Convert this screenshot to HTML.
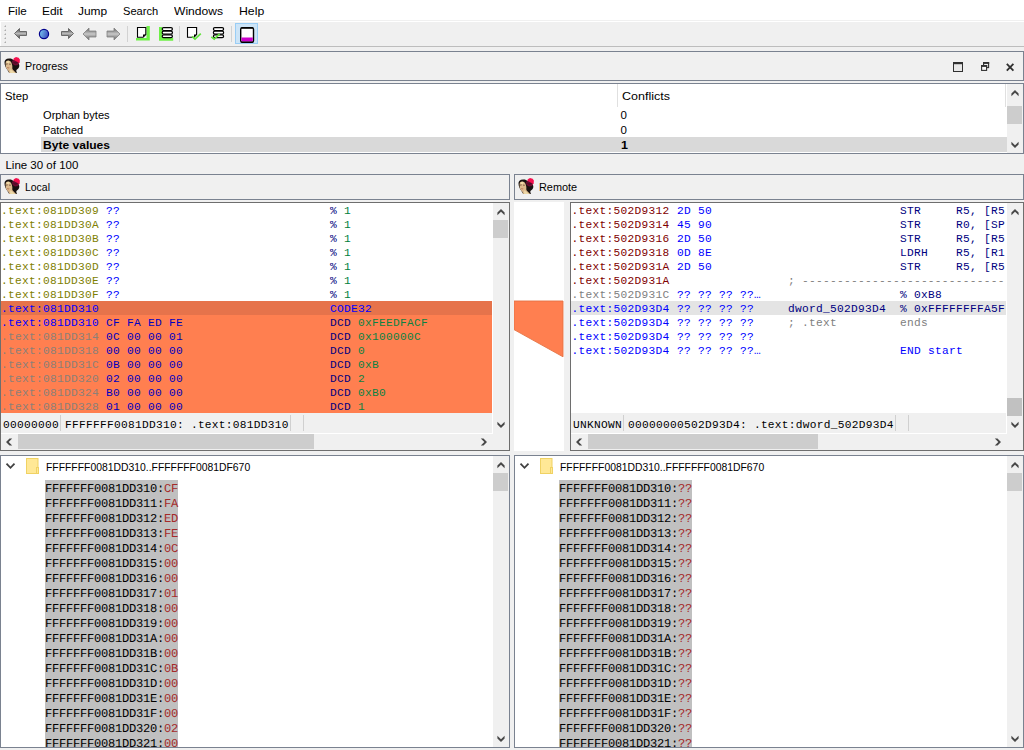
<!DOCTYPE html>
<html><head><meta charset="utf-8"><title>Progress</title>
<style>
*{margin:0;padding:0;box-sizing:border-box}
html,body{width:1024px;height:750px;overflow:hidden;background:#f0f0f0}
body{position:relative;font-family:"Liberation Sans",sans-serif;font-size:11.5px;color:#000}
.abs{position:absolute}
.ui{font-family:"Liberation Sans",sans-serif;font-size:11.5px;line-height:16px;height:16px;white-space:pre;position:absolute;transform-origin:0 0;color:#000}
.box{position:absolute;border:1px solid #7a8290;background:#fff}
.cbox{position:absolute;border:1px solid #6e6e6e;background:#fff}
.tp{position:absolute;border:1px solid #7a8290;background:#f0f0f0;height:26px}
.code{position:absolute;font-family:"Liberation Mono",monospace;font-size:11.2px;letter-spacing:0.28px;line-height:14px;white-space:pre;height:14px}
.hexl{position:absolute;font-family:"Liberation Mono",monospace;font-size:12.1px;letter-spacing:-0.261px;line-height:15px;white-space:pre;height:15px;width:133px;background:#c0c0c0;color:#000;text-rendering:geometricPrecision}
.hexl b{font-weight:normal;position:relative;top:2px}
.hexl i{font-style:normal;color:#a52a2a}
.sb{position:absolute;background:#f0f0f0}
.th{position:absolute;background:#cdcdcd}
</style></head>
<body>
<div class="abs" style="left:0;top:0;width:1024px;height:20px;background:#fff"></div>
<div class="ui" style="left:7.79px;top:3px;transform:scaleX(1.0117)">File</div>
<div class="ui" style="left:41.71px;top:3px;transform:scaleX(1.0372)">Edit</div>
<div class="ui" style="left:77.72px;top:3px;transform:scaleX(1.0373)">Jump</div>
<div class="ui" style="left:122.79px;top:3px;transform:scaleX(0.9666)">Search</div>
<div class="ui" style="left:174.35px;top:3px;transform:scaleX(1.0504)">Windows</div>
<div class="ui" style="left:238.79px;top:3px;transform:scaleX(1.0664)">Help</div>
<div class="abs" style="left:0;top:21px;width:1024px;height:1px;background:#fff"></div><div class="abs" style="left:0;top:22px;width:1px;height:24px;background:#fff"></div>
<svg class="abs" style="left:0;top:22px" width="270" height="24" viewBox="0 22 270 24">
<defs>
<linearGradient id="ga" gradientUnits="userSpaceOnUse" x1="0" y1="30" x2="0" y2="38"><stop offset="0" stop-color="#828282"/><stop offset="0.5" stop-color="#c8c8c8"/><stop offset="1" stop-color="#828282"/></linearGradient>
<linearGradient id="gb" x1="0" y1="0" x2="1" y2="0.3"><stop offset="0" stop-color="#7fd0f4"/><stop offset="1" stop-color="#3f55c0"/></linearGradient>
<linearGradient id="gc" gradientUnits="userSpaceOnUse" x1="0" y1="30.5" x2="0" y2="36.5"><stop offset="0" stop-color="#747474"/><stop offset="0.5" stop-color="#b8b8b8"/><stop offset="1" stop-color="#747474"/></linearGradient>
</defs>
<g fill="#acacac"><path d="M6,25v2h-2z"/><path d="M6,29v2h-2z"/><path d="M6,33v2h-2z"/><path d="M6,37v2h-2z"/><path d="M6,41v2h-2z"/></g>
<!-- back arrow (outlined) -->
<path d="M14.5,33.5 L19.5,28.5 L19.5,31.5 L26.5,31.5 L26.5,35.5 L19.5,35.5 L19.5,38.5 Z" fill="url(#gc)" stroke="#6a6a6a" stroke-width="1"/>
<!-- blue circle -->
<circle cx="44" cy="34" r="4.6" fill="url(#gb)" stroke="#00008c" stroke-width="1.2"/>
<!-- forward arrow (outlined) -->
<path d="M73.5,33.5 L68.5,28.5 L68.5,31.5 L61.5,31.5 L61.5,35.5 L68.5,35.5 L68.5,38.5 Z" fill="url(#gc)" stroke="#6a6a6a" stroke-width="1"/>
<!-- big gray left arrow -->
<path d="M83,34 L89,28 L89,31 L96,31 L96,37 L89,37 L89,40 Z" fill="url(#ga)" stroke="#808080" stroke-width="0.8"/>
<!-- big gray right arrow -->
<path d="M120,34 L114,28 L114,31 L107,31 L107,37 L114,37 L114,40 Z" fill="url(#ga)" stroke="#808080" stroke-width="0.8"/>
<rect x="127" y="26" width="1" height="16" fill="#d2d2d2"/>
<!-- page with green corner -->
<path d="M136,38 H146.5 V26 H149.8 V40.6 H136 Z" fill="#6ef046"/>
<path d="M137.5,27.5 H145.8 V34.5 L143,37.3 H137.5 Z" fill="#fff" stroke="#000" stroke-width="1.1"/>
<path d="M145.8,34.5 H143 V37.3 Z" fill="#000"/>
<!-- stack with green L -->
<path d="M159,27 H162 V38 H173.2 V40.8 H159 Z" fill="#6ef046"/>
<g fill="#fff" stroke="#000" stroke-width="1.2"><rect x="162.2" y="27.6" width="10.2" height="2.9" rx="1.4"/><rect x="162.2" y="31.2" width="10.2" height="2.9" rx="1.4"/><rect x="162.2" y="34.8" width="10.2" height="2.9" rx="1.4"/></g>
<rect x="179" y="26" width="1" height="16" fill="#d2d2d2"/>
<!-- page with check -->
<path d="M187.5,27.5 H196.6 V34.5 L194,37.3 H187.5 Z" fill="#fff" stroke="#000" stroke-width="1.1"/>
<path d="M196.6,34.5 H194 V37.3 Z" fill="#000"/>
<path d="M192,36.3 L195,39 L200.8,33.6" fill="none" stroke="#62e23e" stroke-width="1.7"/>
<!-- stack with check -->
<g fill="#fff" stroke="#000" stroke-width="1.2"><rect x="213.4" y="27.6" width="10.2" height="2.9" rx="1.4"/><rect x="213.4" y="31.2" width="10.2" height="2.9" rx="1.4"/><rect x="213.4" y="34.8" width="10.2" height="2.9" rx="1.4"/></g>
<path d="M211.3,36.8 L214.2,39.2 L219.6,33.8" fill="none" stroke="#62e23e" stroke-width="1.7"/>
<rect x="231" y="26" width="1" height="16" fill="#d2d2d2"/>
<!-- selected -->
<rect x="235.5" y="23.5" width="22" height="20" fill="#cce4f7" stroke="#99cdf5" stroke-width="1"/>
<rect x="240.7" y="27.7" width="12.8" height="14.6" rx="1.5" fill="#fff" stroke="#000" stroke-width="1.4"/>
<path d="M241.4,37.5 H252.8 V40.5 Q252.8,41.6 251.6,41.6 H242.6 Q241.4,41.6 241.4,40.5 Z" fill="#cc00cc"/>
<rect x="241.5" y="27" width="11.2" height="1.6" fill="#000"/>
<rect x="241.5" y="41.6" width="11.2" height="1.4" fill="#000"/>
</svg>

<div class="abs" style="left:0;top:46px;width:1024px;height:1px;background:#bdbdbd"></div>
<div class="tp" style="left:0;top:51px;width:1024px;height:30px"></div>
<svg class="abs" style="left:4px;top:57px" width="16" height="16" viewBox="0 0 16 16"><path d="M0.5,5.6 C0.3,3.2 2,1.6 5,1.5 C7,1.3 8.6,2 9.6,3 L14.2,6 C16,8 15.6,10.8 13.6,12 C12.6,12.7 12.1,13.2 12.4,14.2 L12.9,16 L5.2,16 L3.6,13.2 C1.6,11 0.6,8.2 0.5,5.6Z" fill="#17110f"/>
<path d="M2.2,4.3 C3.2,3.1 5.2,3.1 6.4,4.3 C7.6,5.7 8.1,7.4 8.3,9 C8.5,10.4 8,11.4 8.7,12.4 L12.1,15.9 L5.3,16 C5.1,14.6 4.1,13.7 3.1,12.6 C1.9,11 1.5,9 1.7,7.5 C1.5,6.2 1.6,5.1 2.2,4.3Z" fill="#dcb98c"/>
<path d="M2.6,4.6 C3.4,3.6 4.8,3.6 5.6,4.6 C5.8,5.6 5,6.2 3.6,6.2 C2.8,6.1 2.4,5.4 2.6,4.6Z" fill="#f1dcaa"/>
<path d="M6.4,12.2 C7.4,13 9.6,14.6 11.4,15.9 L6.2,16 C6.2,14.8 6,13.4 6.4,12.2Z" fill="#ecd9a8"/>
<path d="M2.2,7.1 L3.6,6.9 M5.2,7.1 L6.6,7.3" stroke="#4a3020" stroke-width="0.8" fill="none"/>
<path d="M3.2,10.6 C3.8,11 4.6,11 5.2,10.7" stroke="#a8553c" stroke-width="0.7" fill="none"/>
<path d="M9.8,1.2 L12,0 L14.6,0.7 L15.9,2.6 L15.7,5.2 L14.4,6.4 L9.2,3.2Z" fill="#f4104e"/>
<path d="M7.9,4 L9.8,2.9 L14.6,5.4 L14.3,8 L11,8.5 L8.6,7Z" fill="#6a0c30"/>
<path d="M9.4,5.2 L11,6.2 L13.2,5.6" stroke="#3a0a1c" stroke-width="0.8" fill="none"/>
</svg>
<div class="ui" style="left:24.91px;top:58px;transform:scaleX(0.9317)">Progress</div>
<svg class="abs" style="left:950px;top:58px" width="70" height="18" viewBox="950 58 70 18">
<rect x="953.5" y="63" width="9" height="8.5" fill="#e8e8e8" stroke="#303030" stroke-width="1"/>
<rect x="953" y="62" width="10" height="2.2" fill="#303030"/>
<rect x="983.6" y="63" width="5" height="4.6" fill="#f0f0f0" stroke="#303030" stroke-width="1.1"/>
<rect x="983" y="62" width="6.2" height="1.8" fill="#303030"/>
<rect x="981.6" y="66" width="5" height="4.4" fill="#f7f7f7" stroke="#303030" stroke-width="1.1"/>
<rect x="981" y="65" width="6.2" height="1.8" fill="#303030"/>
<path d="M1006.8,63.8 L1013.4,70.6 M1013.4,63.8 L1006.8,70.6" stroke="#303030" stroke-width="1.8" fill="none"/>
</svg>

<div class="box" style="left:0;top:83px;width:1024px;height:71px"></div>
<div class="abs" style="left:41px;top:137px;width:966px;height:15px;background:#d9d9d9"></div>
<div class="abs" style="left:617px;top:84px;width:1px;height:23px;background:#e0e0e0"></div>
<div class="abs" style="left:1005px;top:84px;width:1px;height:23px;background:#e0e0e0"></div>
<div class="ui" style="left:4.79px;top:88px;transform:scaleX(0.9801)">Step</div>
<div class="ui" style="left:621.68px;top:88px;transform:scaleX(1.0858)">Conflicts</div>
<div class="ui" style="left:43.27px;top:107px;transform:scaleX(0.9651)">Orphan bytes</div>
<div class="ui" style="left:42.90px;top:122px;transform:scaleX(0.9481)">Patched</div>
<div class="ui" style="left:43.49px;top:137px;transform:scaleX(1.0483);font-weight:bold">Byte values</div>
<div class="ui" style="left:620.45px;top:107px;transform:scaleX(1.0000)">0</div>
<div class="ui" style="left:620.45px;top:122px;transform:scaleX(1.0000)">0</div>
<div class="ui" style="left:620.91px;top:137px;transform:scaleX(1.0841);font-weight:bold">1</div>
<div class="sb" style="left:1007px;top:84px;width:16px;height:69px"></div>
<div class="th" style="left:1007px;top:106px;width:15px;height:18px"></div>
<svg class="abs" style="left:1006.5px;top:85.0px" width="16" height="16" viewBox="-8 -8 16 16"><polygon points="-3.6,0.5 0.0,-3.0 3.6,0.5 3.6,3.2 0.0,-0.3 -3.6,3.2" fill="#484848"/></svg>
<svg class="abs" style="left:1006.5px;top:137.0px" width="16" height="16" viewBox="-8 -8 16 16"><polygon points="-3.6,-0.5 0.0,3.0 3.6,-0.5 3.6,-3.2 0.0,0.3 -3.6,-3.2" fill="#484848"/></svg>
<div class="ui" style="left:5.45px;top:157px;transform:scaleX(1.0000)">Line 30 of 100</div>
<div class="tp" style="left:0;top:174px;width:510px"></div>
<div class="tp" style="left:514px;top:174px;width:510px"></div>
<svg class="abs" style="left:4px;top:178px" width="16" height="16" viewBox="0 0 16 16"><path d="M0.5,5.6 C0.3,3.2 2,1.6 5,1.5 C7,1.3 8.6,2 9.6,3 L14.2,6 C16,8 15.6,10.8 13.6,12 C12.6,12.7 12.1,13.2 12.4,14.2 L12.9,16 L5.2,16 L3.6,13.2 C1.6,11 0.6,8.2 0.5,5.6Z" fill="#17110f"/>
<path d="M2.2,4.3 C3.2,3.1 5.2,3.1 6.4,4.3 C7.6,5.7 8.1,7.4 8.3,9 C8.5,10.4 8,11.4 8.7,12.4 L12.1,15.9 L5.3,16 C5.1,14.6 4.1,13.7 3.1,12.6 C1.9,11 1.5,9 1.7,7.5 C1.5,6.2 1.6,5.1 2.2,4.3Z" fill="#dcb98c"/>
<path d="M2.6,4.6 C3.4,3.6 4.8,3.6 5.6,4.6 C5.8,5.6 5,6.2 3.6,6.2 C2.8,6.1 2.4,5.4 2.6,4.6Z" fill="#f1dcaa"/>
<path d="M6.4,12.2 C7.4,13 9.6,14.6 11.4,15.9 L6.2,16 C6.2,14.8 6,13.4 6.4,12.2Z" fill="#ecd9a8"/>
<path d="M2.2,7.1 L3.6,6.9 M5.2,7.1 L6.6,7.3" stroke="#4a3020" stroke-width="0.8" fill="none"/>
<path d="M3.2,10.6 C3.8,11 4.6,11 5.2,10.7" stroke="#a8553c" stroke-width="0.7" fill="none"/>
<path d="M9.8,1.2 L12,0 L14.6,0.7 L15.9,2.6 L15.7,5.2 L14.4,6.4 L9.2,3.2Z" fill="#f4104e"/>
<path d="M7.9,4 L9.8,2.9 L14.6,5.4 L14.3,8 L11,8.5 L8.6,7Z" fill="#6a0c30"/>
<path d="M9.4,5.2 L11,6.2 L13.2,5.6" stroke="#3a0a1c" stroke-width="0.8" fill="none"/>
</svg>
<svg class="abs" style="left:518px;top:178px" width="16" height="16" viewBox="0 0 16 16"><path d="M0.5,5.6 C0.3,3.2 2,1.6 5,1.5 C7,1.3 8.6,2 9.6,3 L14.2,6 C16,8 15.6,10.8 13.6,12 C12.6,12.7 12.1,13.2 12.4,14.2 L12.9,16 L5.2,16 L3.6,13.2 C1.6,11 0.6,8.2 0.5,5.6Z" fill="#17110f"/>
<path d="M2.2,4.3 C3.2,3.1 5.2,3.1 6.4,4.3 C7.6,5.7 8.1,7.4 8.3,9 C8.5,10.4 8,11.4 8.7,12.4 L12.1,15.9 L5.3,16 C5.1,14.6 4.1,13.7 3.1,12.6 C1.9,11 1.5,9 1.7,7.5 C1.5,6.2 1.6,5.1 2.2,4.3Z" fill="#dcb98c"/>
<path d="M2.6,4.6 C3.4,3.6 4.8,3.6 5.6,4.6 C5.8,5.6 5,6.2 3.6,6.2 C2.8,6.1 2.4,5.4 2.6,4.6Z" fill="#f1dcaa"/>
<path d="M6.4,12.2 C7.4,13 9.6,14.6 11.4,15.9 L6.2,16 C6.2,14.8 6,13.4 6.4,12.2Z" fill="#ecd9a8"/>
<path d="M2.2,7.1 L3.6,6.9 M5.2,7.1 L6.6,7.3" stroke="#4a3020" stroke-width="0.8" fill="none"/>
<path d="M3.2,10.6 C3.8,11 4.6,11 5.2,10.7" stroke="#a8553c" stroke-width="0.7" fill="none"/>
<path d="M9.8,1.2 L12,0 L14.6,0.7 L15.9,2.6 L15.7,5.2 L14.4,6.4 L9.2,3.2Z" fill="#f4104e"/>
<path d="M7.9,4 L9.8,2.9 L14.6,5.4 L14.3,8 L11,8.5 L8.6,7Z" fill="#6a0c30"/>
<path d="M9.4,5.2 L11,6.2 L13.2,5.6" stroke="#3a0a1c" stroke-width="0.8" fill="none"/>
</svg>
<div class="ui" style="left:24.94px;top:179px;transform:scaleX(0.9079)">Local</div>
<div class="ui" style="left:538.60px;top:179px;transform:scaleX(0.9459)">Remote</div>
<div class="cbox" style="left:0;top:202px;width:510px;height:249px"></div>
<div class="abs" style="left:1px;top:301px;width:491px;height:14px;background:#e6734b"></div>
<div class="abs" style="left:1px;top:315px;width:491px;height:98px;background:#ff7f50"></div>
<div class="code" style="left:1px;top:204px;color:#808000">.text:081DD309</div>
<div class="code" style="left:106px;top:204px;color:#0000ff">??</div>
<div class="code" style="left:330px;top:204px;color:#000080">%</div>
<div class="code" style="left:344px;top:204px;color:#008040">1</div>
<div class="code" style="left:1px;top:218px;color:#808000">.text:081DD30A</div>
<div class="code" style="left:106px;top:218px;color:#0000ff">??</div>
<div class="code" style="left:330px;top:218px;color:#000080">%</div>
<div class="code" style="left:344px;top:218px;color:#008040">1</div>
<div class="code" style="left:1px;top:232px;color:#808000">.text:081DD30B</div>
<div class="code" style="left:106px;top:232px;color:#0000ff">??</div>
<div class="code" style="left:330px;top:232px;color:#000080">%</div>
<div class="code" style="left:344px;top:232px;color:#008040">1</div>
<div class="code" style="left:1px;top:246px;color:#808000">.text:081DD30C</div>
<div class="code" style="left:106px;top:246px;color:#0000ff">??</div>
<div class="code" style="left:330px;top:246px;color:#000080">%</div>
<div class="code" style="left:344px;top:246px;color:#008040">1</div>
<div class="code" style="left:1px;top:260px;color:#808000">.text:081DD30D</div>
<div class="code" style="left:106px;top:260px;color:#0000ff">??</div>
<div class="code" style="left:330px;top:260px;color:#000080">%</div>
<div class="code" style="left:344px;top:260px;color:#008040">1</div>
<div class="code" style="left:1px;top:274px;color:#808000">.text:081DD30E</div>
<div class="code" style="left:106px;top:274px;color:#0000ff">??</div>
<div class="code" style="left:330px;top:274px;color:#000080">%</div>
<div class="code" style="left:344px;top:274px;color:#008040">1</div>
<div class="code" style="left:1px;top:288px;color:#808000">.text:081DD30F</div>
<div class="code" style="left:106px;top:288px;color:#0000ff">??</div>
<div class="code" style="left:330px;top:288px;color:#000080">%</div>
<div class="code" style="left:344px;top:288px;color:#008040">1</div>
<div class="code" style="left:1px;top:302px;color:#0000ff">.text:081DD310</div>
<div class="code" style="left:330px;top:302px;color:#0000ff">CODE32</div>
<div class="code" style="left:1px;top:316px;color:#0000ff">.text:081DD310</div>
<div class="code" style="left:106px;top:316px;color:#0000c0">CF FA ED FE</div>
<div class="code" style="left:330px;top:316px;color:#000080">DCD</div>
<div class="code" style="left:358px;top:316px;color:#0c8242">0xFEEDFACF</div>
<div class="code" style="left:1px;top:330px;color:#8c8078">.text:081DD314</div>
<div class="code" style="left:106px;top:330px;color:#0000c0">0C 00 00 01</div>
<div class="code" style="left:330px;top:330px;color:#000080">DCD</div>
<div class="code" style="left:358px;top:330px;color:#0c8242">0x100000C</div>
<div class="code" style="left:1px;top:344px;color:#8c8078">.text:081DD318</div>
<div class="code" style="left:106px;top:344px;color:#0000c0">00 00 00 00</div>
<div class="code" style="left:330px;top:344px;color:#000080">DCD</div>
<div class="code" style="left:358px;top:344px;color:#0c8242">0</div>
<div class="code" style="left:1px;top:358px;color:#8c8078">.text:081DD31C</div>
<div class="code" style="left:106px;top:358px;color:#0000c0">0B 00 00 00</div>
<div class="code" style="left:330px;top:358px;color:#000080">DCD</div>
<div class="code" style="left:358px;top:358px;color:#0c8242">0xB</div>
<div class="code" style="left:1px;top:372px;color:#8c8078">.text:081DD320</div>
<div class="code" style="left:106px;top:372px;color:#0000c0">02 00 00 00</div>
<div class="code" style="left:330px;top:372px;color:#000080">DCD</div>
<div class="code" style="left:358px;top:372px;color:#0c8242">2</div>
<div class="code" style="left:1px;top:386px;color:#8c8078">.text:081DD324</div>
<div class="code" style="left:106px;top:386px;color:#0000c0">B0 00 00 00</div>
<div class="code" style="left:330px;top:386px;color:#000080">DCD</div>
<div class="code" style="left:358px;top:386px;color:#0c8242">0xB0</div>
<div class="code" style="left:1px;top:400px;color:#8c8078">.text:081DD328</div>
<div class="code" style="left:106px;top:400px;color:#0000c0">01 00 00 00</div>
<div class="code" style="left:330px;top:400px;color:#000080">DCD</div>
<div class="code" style="left:358px;top:400px;color:#0c8242">1</div>
<div class="abs" style="left:1px;top:413px;width:492px;height:21px;background:#f0f0f0;border-right:1px solid #fff;border-bottom:1px solid #fff"></div>
<div class="abs" style="left:60px;top:415px;width:1px;height:16px;background:#d0d0d0"></div>
<div class="abs" style="left:290px;top:415px;width:1px;height:16px;background:#d0d0d0"></div>
<div class="abs" style="left:303px;top:415px;width:1px;height:16px;background:#d0d0d0"></div>
<div class="code" style="left:3px;top:418px;color:#000">00000000</div>
<div class="code" style="left:65px;top:418px;color:#000">FFFFFFF0081DD310: .text:081DD310</div>
<div class="sb" style="left:493px;top:203px;width:16px;height:231px"></div>
<div class="th" style="left:493px;top:220px;width:15px;height:18px"></div>
<div class="sb" style="left:1px;top:434px;width:508px;height:16px"></div>
<div class="th" style="left:18px;top:434px;width:296px;height:15px"></div>
<svg class="abs" style="left:492.5px;top:204.0px" width="16" height="16" viewBox="-8 -8 16 16"><polygon points="-3.6,0.5 0.0,-3.0 3.6,0.5 3.6,3.2 0.0,-0.3 -3.6,3.2" fill="#484848"/></svg>
<svg class="abs" style="left:492.5px;top:417.0px" width="16" height="16" viewBox="-8 -8 16 16"><polygon points="-3.6,-0.5 0.0,3.0 3.6,-0.5 3.6,-3.2 0.0,0.3 -3.6,-3.2" fill="#484848"/></svg>
<svg class="abs" style="left:1.0px;top:433.5px" width="16" height="16" viewBox="-8 -8 16 16"><polygon points="0.5,-3.6 -3.0,0.0 0.5,3.6 3.2,3.6 -0.3,0.0 3.2,-3.6" fill="#484848"/></svg>
<svg class="abs" style="left:476.0px;top:433.5px" width="16" height="16" viewBox="-8 -8 16 16"><polygon points="-0.5,-3.6 3.0,0.0 -0.5,3.6 -3.2,3.6 0.3,0.0 -3.2,-3.6" fill="#484848"/></svg>
<div class="abs" style="left:514px;top:202px;width:50px;height:249px;background:#fff"></div>
<svg class="abs" style="left:514px;top:202px" width="50" height="249"><polygon points="0,99 49,99 49,154.8 0,127.6" fill="#ff7f50" stroke="#e47343" stroke-width="0.9"/></svg>
<div class="cbox" style="left:570px;top:202px;width:454px;height:249px"></div>
<div class="abs" style="left:571px;top:301px;width:435px;height:14px;background:#e4e4e4"></div>
<div class="code" style="left:571.5px;top:204px;color:#800000">.text:502D9312</div>
<div class="code" style="left:677px;top:204px;color:#0000ff">2D 50</div>
<div class="code" style="left:900px;top:204px;color:#000080">STR</div>
<div class="code" style="left:956px;top:204px;color:#000080">R5, [R5</div>
<div class="code" style="left:571.5px;top:218px;color:#800000">.text:502D9314</div>
<div class="code" style="left:677px;top:218px;color:#0000ff">45 90</div>
<div class="code" style="left:900px;top:218px;color:#000080">STR</div>
<div class="code" style="left:956px;top:218px;color:#000080">R0, [SP</div>
<div class="code" style="left:571.5px;top:232px;color:#800000">.text:502D9316</div>
<div class="code" style="left:677px;top:232px;color:#0000ff">2D 50</div>
<div class="code" style="left:900px;top:232px;color:#000080">STR</div>
<div class="code" style="left:956px;top:232px;color:#000080">R5, [R5</div>
<div class="code" style="left:571.5px;top:246px;color:#800000">.text:502D9318</div>
<div class="code" style="left:677px;top:246px;color:#0000ff">0D 8E</div>
<div class="code" style="left:900px;top:246px;color:#000080">LDRH</div>
<div class="code" style="left:956px;top:246px;color:#000080">R5, [R1</div>
<div class="code" style="left:571.5px;top:260px;color:#800000">.text:502D931A</div>
<div class="code" style="left:677px;top:260px;color:#0000ff">2D 50</div>
<div class="code" style="left:900px;top:260px;color:#000080">STR</div>
<div class="code" style="left:956px;top:260px;color:#000080">R5, [R5</div>
<div class="code" style="left:571.5px;top:274px;color:#800000">.text:502D931A</div>
<div class="code" style="left:788px;top:274px;color:#808080;width:218px;overflow:hidden">; --------------------------------</div>
<div class="code" style="left:571.5px;top:288px;color:#808080">.text:502D931C</div>
<div class="code" style="left:677px;top:288px;color:#0000ff">?? ?? ?? ??…</div>
<div class="code" style="left:900px;top:288px;color:#000080">% 0xB8</div>
<div class="code" style="left:571.5px;top:302px;color:#0000ff">.text:502D93D4</div>
<div class="code" style="left:677px;top:302px;color:#0000ff">?? ?? ?? ??</div>
<div class="code" style="left:788px;top:302px;color:#000080">dword_502D93D4</div>
<div class="code" style="left:900px;top:302px;color:#000080">% 0xFFFFFFFFA5F</div>
<div class="code" style="left:571.5px;top:316px;color:#0000ff">.text:502D93D4</div>
<div class="code" style="left:677px;top:316px;color:#0000ff">?? ?? ?? ??</div>
<div class="code" style="left:788px;top:316px;color:#808080">; .text</div>
<div class="code" style="left:900px;top:316px;color:#808080">ends</div>
<div class="code" style="left:571.5px;top:330px;color:#0000ff">.text:502D93D4</div>
<div class="code" style="left:677px;top:330px;color:#0000ff">?? ?? ?? ??</div>
<div class="code" style="left:571.5px;top:344px;color:#0000ff">.text:502D93D4</div>
<div class="code" style="left:677px;top:344px;color:#0000ff">?? ?? ?? ??…</div>
<div class="code" style="left:900px;top:344px;color:#0000ff">END start</div>
<div class="abs" style="left:571px;top:413px;width:436px;height:21px;background:#f0f0f0;border-right:1px solid #fff;border-bottom:1px solid #fff"></div>
<div class="abs" style="left:623px;top:415px;width:1px;height:16px;background:#d0d0d0"></div>
<div class="abs" style="left:895px;top:415px;width:1px;height:16px;background:#d0d0d0"></div>
<div class="abs" style="left:908px;top:415px;width:1px;height:16px;background:#d0d0d0"></div>
<div class="code" style="left:573px;top:418px;color:#000">UNKNOWN</div>
<div class="code" style="left:628px;top:418px;color:#000">00000000502D93D4: .text:dword_502D93D4</div>
<div class="sb" style="left:1007px;top:203px;width:16px;height:231px"></div>
<div class="th" style="left:1007px;top:398px;width:15px;height:18px;background:#c1c1c1"></div>
<div class="sb" style="left:571px;top:434px;width:452px;height:16px"></div>
<div class="th" style="left:588px;top:434px;width:230px;height:15px"></div>
<svg class="abs" style="left:1006.5px;top:204.0px" width="16" height="16" viewBox="-8 -8 16 16"><polygon points="-3.6,0.5 0.0,-3.0 3.6,0.5 3.6,3.2 0.0,-0.3 -3.6,3.2" fill="#484848"/></svg>
<svg class="abs" style="left:1006.5px;top:417.0px" width="16" height="16" viewBox="-8 -8 16 16"><polygon points="-3.6,-0.5 0.0,3.0 3.6,-0.5 3.6,-3.2 0.0,0.3 -3.6,-3.2" fill="#484848"/></svg>
<svg class="abs" style="left:571.0px;top:433.5px" width="16" height="16" viewBox="-8 -8 16 16"><polygon points="0.5,-3.6 -3.0,0.0 0.5,3.6 3.2,3.6 -0.3,0.0 3.2,-3.6" fill="#484848"/></svg>
<svg class="abs" style="left:990.2px;top:433.5px" width="16" height="16" viewBox="-8 -8 16 16"><polygon points="-0.5,-3.6 3.0,0.0 -0.5,3.6 -3.2,3.6 0.3,0.0 -3.2,-3.6" fill="#484848"/></svg>
<div class="box" style="left:0px;top:455px;width:510px;height:293px"></div>
<div class="sb" style="left:493px;top:456px;width:16px;height:291px"></div>
<div class="th" style="left:493px;top:473px;width:15px;height:18px"></div>
<svg class="abs" style="left:492.5px;top:457.0px" width="16" height="16" viewBox="-8 -8 16 16"><polygon points="-3.6,0.5 0.0,-3.0 3.6,0.5 3.6,3.2 0.0,-0.3 -3.6,3.2" fill="#484848"/></svg>
<svg class="abs" style="left:492.5px;top:731.0px" width="16" height="16" viewBox="-8 -8 16 16"><polygon points="-3.6,-0.5 0.0,3.0 3.6,-0.5 3.6,-3.2 0.0,0.3 -3.6,-3.2" fill="#484848"/></svg>
<svg class="abs" style="left:4px;top:460px" width="14" height="12" viewBox="4 460 14 12"><polyline points="6.5,463.6 10.5,467.8 14.5,463.6" fill="none" stroke="#404040" stroke-width="1.8"/></svg>
<svg class="abs" style="left:26px;top:458px" width="14" height="17" viewBox="0 0 14 17"><rect x="0.5" y="0.5" width="11.5" height="15" fill="#ffe896" stroke="#f0d263" stroke-width="1"/><rect x="10.5" y="9.5" width="2" height="6" fill="#ffe896" stroke="#f0d263" stroke-width="1"/></svg>
<div class="ui" style="left:46.14px;top:459px;transform:scaleX(0.9025)">FFFFFFF0081DD310..FFFFFFF0081DF670</div>
<div class="box" style="left:514px;top:455px;width:510px;height:293px"></div>
<div class="sb" style="left:1007px;top:456px;width:16px;height:291px"></div>
<div class="th" style="left:1007px;top:473px;width:15px;height:18px"></div>
<svg class="abs" style="left:1006.5px;top:457.0px" width="16" height="16" viewBox="-8 -8 16 16"><polygon points="-3.6,0.5 0.0,-3.0 3.6,0.5 3.6,3.2 0.0,-0.3 -3.6,3.2" fill="#484848"/></svg>
<svg class="abs" style="left:1006.5px;top:731.0px" width="16" height="16" viewBox="-8 -8 16 16"><polygon points="-3.6,-0.5 0.0,3.0 3.6,-0.5 3.6,-3.2 0.0,0.3 -3.6,-3.2" fill="#484848"/></svg>
<svg class="abs" style="left:518px;top:460px" width="14" height="12" viewBox="4 460 14 12"><polyline points="6.5,463.6 10.5,467.8 14.5,463.6" fill="none" stroke="#404040" stroke-width="1.8"/></svg>
<svg class="abs" style="left:540px;top:458px" width="14" height="17" viewBox="0 0 14 17"><rect x="0.5" y="0.5" width="11.5" height="15" fill="#ffe896" stroke="#f0d263" stroke-width="1"/><rect x="10.5" y="9.5" width="2" height="6" fill="#ffe896" stroke="#f0d263" stroke-width="1"/></svg>
<div class="ui" style="left:560.14px;top:459px;transform:scaleX(0.9025)">FFFFFFF0081DD310..FFFFFFF0081DF670</div>
<div class="hexl" style="left:45px;top:480px"><b>FFFFFFF0081DD310:<i>CF</i></b></div>
<div class="hexl" style="left:559px;top:480px"><b>FFFFFFF0081DD310:<i>??</i></b></div>
<div class="hexl" style="left:45px;top:495px"><b>FFFFFFF0081DD311:<i>FA</i></b></div>
<div class="hexl" style="left:559px;top:495px"><b>FFFFFFF0081DD311:<i>??</i></b></div>
<div class="hexl" style="left:45px;top:510px"><b>FFFFFFF0081DD312:<i>ED</i></b></div>
<div class="hexl" style="left:559px;top:510px"><b>FFFFFFF0081DD312:<i>??</i></b></div>
<div class="hexl" style="left:45px;top:525px"><b>FFFFFFF0081DD313:<i>FE</i></b></div>
<div class="hexl" style="left:559px;top:525px"><b>FFFFFFF0081DD313:<i>??</i></b></div>
<div class="hexl" style="left:45px;top:540px"><b>FFFFFFF0081DD314:<i>0C</i></b></div>
<div class="hexl" style="left:559px;top:540px"><b>FFFFFFF0081DD314:<i>??</i></b></div>
<div class="hexl" style="left:45px;top:555px"><b>FFFFFFF0081DD315:<i>00</i></b></div>
<div class="hexl" style="left:559px;top:555px"><b>FFFFFFF0081DD315:<i>??</i></b></div>
<div class="hexl" style="left:45px;top:570px"><b>FFFFFFF0081DD316:<i>00</i></b></div>
<div class="hexl" style="left:559px;top:570px"><b>FFFFFFF0081DD316:<i>??</i></b></div>
<div class="hexl" style="left:45px;top:585px"><b>FFFFFFF0081DD317:<i>01</i></b></div>
<div class="hexl" style="left:559px;top:585px"><b>FFFFFFF0081DD317:<i>??</i></b></div>
<div class="hexl" style="left:45px;top:600px"><b>FFFFFFF0081DD318:<i>00</i></b></div>
<div class="hexl" style="left:559px;top:600px"><b>FFFFFFF0081DD318:<i>??</i></b></div>
<div class="hexl" style="left:45px;top:615px"><b>FFFFFFF0081DD319:<i>00</i></b></div>
<div class="hexl" style="left:559px;top:615px"><b>FFFFFFF0081DD319:<i>??</i></b></div>
<div class="hexl" style="left:45px;top:630px"><b>FFFFFFF0081DD31A:<i>00</i></b></div>
<div class="hexl" style="left:559px;top:630px"><b>FFFFFFF0081DD31A:<i>??</i></b></div>
<div class="hexl" style="left:45px;top:645px"><b>FFFFFFF0081DD31B:<i>00</i></b></div>
<div class="hexl" style="left:559px;top:645px"><b>FFFFFFF0081DD31B:<i>??</i></b></div>
<div class="hexl" style="left:45px;top:660px"><b>FFFFFFF0081DD31C:<i>0B</i></b></div>
<div class="hexl" style="left:559px;top:660px"><b>FFFFFFF0081DD31C:<i>??</i></b></div>
<div class="hexl" style="left:45px;top:675px"><b>FFFFFFF0081DD31D:<i>00</i></b></div>
<div class="hexl" style="left:559px;top:675px"><b>FFFFFFF0081DD31D:<i>??</i></b></div>
<div class="hexl" style="left:45px;top:690px"><b>FFFFFFF0081DD31E:<i>00</i></b></div>
<div class="hexl" style="left:559px;top:690px"><b>FFFFFFF0081DD31E:<i>??</i></b></div>
<div class="hexl" style="left:45px;top:705px"><b>FFFFFFF0081DD31F:<i>00</i></b></div>
<div class="hexl" style="left:559px;top:705px"><b>FFFFFFF0081DD31F:<i>??</i></b></div>
<div class="hexl" style="left:45px;top:720px"><b>FFFFFFF0081DD320:<i>02</i></b></div>
<div class="hexl" style="left:559px;top:720px"><b>FFFFFFF0081DD320:<i>??</i></b></div>
<div class="hexl" style="left:45px;top:735px"><b>FFFFFFF0081DD321:<i>00</i></b></div>
<div class="hexl" style="left:559px;top:735px"><b>FFFFFFF0081DD321:<i>??</i></b></div>
<div class="abs" style="left:0;top:747px;width:1024px;height:3px;background:#f0f0f0"></div>
<div class="abs" style="left:0;top:747px;width:510px;height:1px;background:#7a8290"></div>
<div class="abs" style="left:514px;top:747px;width:510px;height:1px;background:#7a8290"></div>
</body></html>
